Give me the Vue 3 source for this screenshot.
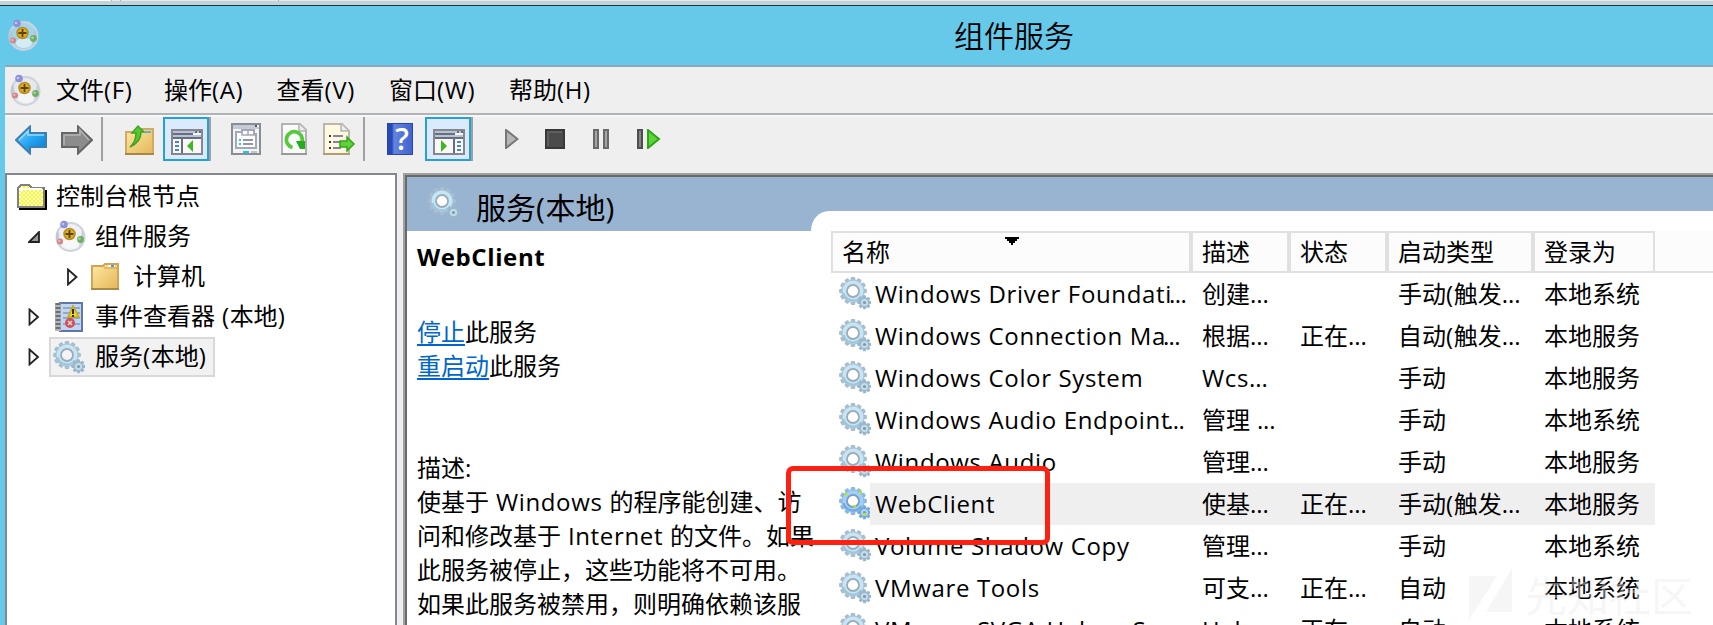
<script setup>
import { h } from 'vue'

// Splits mixed text so Latin runs and trailing dots carry their own tracking.
const Mix = (props) =>
  h('span', { class: 'mix' }, props.t.split(/(\.\.\.|[\x20-\x2d\x2f-\x7e]+)/).filter(Boolean).map((s) =>
    s === '...' ? h('span', { class: 'dots' }, s)
      : /^[\x20-\x7e]+$/.test(s) ? h('span', { class: 'latin' }, s) : s))
Mix.props = ['t']

const cog = (cx, cy, r1, r2, n) => {
  const pts = []
  for (let i = 0; i < n; i++) {
    const a = (i / n) * Math.PI * 2 - Math.PI / 2
    const s = Math.PI / n
    for (const [d, r] of [[-0.95, r1], [-0.5, r2], [0.5, r2], [0.95, r1]]) {
      pts.push((cx + Math.cos(a + d * s) * r).toFixed(2) + ' ' + (cy + Math.sin(a + d * s) * r).toFixed(2))
    }
  }
  return 'M' + pts.join('L') + 'Z'
}
const bigCog = cog(14, 14, 11, 14, 12)
const smallCog = cog(25.5, 25.5, 5, 7, 8)

const Gear = (props) =>
  h('svg', { class: 'gear', width: 32, height: 33, viewBox: '0 0 32 33' }, props.pale
    ? [
        h('path', { d: bigCog, fill: '#8fadcb' }),
        h('circle', { cx: 13, cy: 13, r: 9.5, fill: '#9fb4cc', stroke: '#cfeaf8', 'stroke-width': 3 }),
        h('circle', { cx: 13, cy: 13, r: 7, fill: '#99b4d1', stroke: '#8c9fb5', 'stroke-width': 1.500 }),
        h('path', { d: smallCog, fill: '#8aa9c4' }),
        h('circle', { cx: 25.5, cy: 25.5, r: 3.6, fill: '#b3cede' }),
        h('circle', { cx: 25.5, cy: 25.5, r: 1.4, fill: '#8fa9c2' }),
      ]
    : [
        h('path', { d: bigCog, fill: props.active ? '#8fb9de' : '#a9bfd0' }),
        h('circle', { cx: 14, cy: 14, r: 10.5, fill: props.active ? '#9fd0fa' : '#c5e6f4' }),
        h('path', { d: 'M4.5 16A9.700 9.700 0 0 0 22 19', fill: 'none', stroke: props.active ? '#6fa8e0' : '#9cc6de', 'stroke-width': 2 }),
        h('circle', { cx: 14, cy: 14, r: 6, fill: props.hole || '#fff', stroke: props.active ? '#7f9cc0' : '#9dabb9', 'stroke-width': 1.800 }),
        h('path', { d: smallCog, fill: props.active ? '#76a8dc' : '#9ab7cc' }),
        h('circle', { cx: 25.5, cy: 25.5, r: 3.6, fill: props.active ? '#a8d4fb' : '#c3ddea' }),
        h('circle', { cx: 25.5, cy: 25.5, r: 1.6, fill: '#8199ae' }),
        ...(props.active
          ? [[5, 6], [20, 4], [14, 18], [24, 26]].map(([x, y]) => h('rect', { x, y, width: 3, height: 2.500, fill: '#b5e61d' }))
          : []),
      ])
Gear.props = ['active', 'hole', 'pale']

const Globe = () =>
  h('svg', { class: 'globe', width: 32, height: 32, viewBox: '0 0 32 32' }, [
    h('circle', { cx: 16.500, cy: 17, r: 14, fill: '#dfe2ea', 'fill-opacity': 0.5, stroke: '#cdd3dc', 'stroke-width': 2 }),
    h('path', { d: 'M4 10A14 14 0 0 0 4 24Q7 17 4 10M28 10A14 14 0 0 1 25 27', fill: '#b4bac8', opacity: 0.6 }),
    h('ellipse', { cx: 17, cy: 24, rx: 8, ry: 5, fill: '#fff', opacity: 0.55 }),
    h('circle', { cx: 10, cy: 4.500, r: 3.800, fill: '#8d90d8' }),
    h('circle', { cx: 9, cy: 4, r: 1.300, fill: '#c1c5f4' }),
    h('circle', { cx: 15.500, cy: 14, r: 5.500, fill: '#e0ad1d', stroke: '#b58b28', 'stroke-width': 1.500 }),
    h('path', { d: 'M15.500 10V18M11.500 14H19.500', stroke: '#5b4508', 'stroke-width': 1.800 }),
    h('circle', { cx: 6, cy: 21.500, r: 3, fill: '#d08688' }),
    h('circle', { cx: 5.300, cy: 21, r: 1.200, fill: '#efb3b3' }),
    h('circle', { cx: 26.500, cy: 19.500, r: 3.400, fill: '#6cb065' }),
    h('circle', { cx: 25.500, cy: 18.700, r: 1.300, fill: '#a8d8a0' }),
  ])

const menus = ['文件(F)', '操作(A)', '查看(V)', '窗口(W)', '帮助(H)']
const columns = ['名称', '描述', '状态', '启动类型', '登录为']
const rows = [
  ['Windows Driver Foundati...', '创建...', '', '手动(触发...', '本地系统'],
  ['Windows Connection Ma...', '根据...', '正在...', '自动(触发...', '本地服务'],
  ['Windows Color System', 'Wcs...', '', '手动', '本地服务'],
  ['Windows Audio Endpoint...', '管理 ...', '', '手动', '本地系统'],
  ['Windows Audio', '管理...', '', '手动', '本地服务'],
  ['WebClient', '使基...', '正在...', '手动(触发...', '本地服务'],
  ['Volume Shadow Copy', '管理...', '', '手动', '本地系统'],
  ['VMware Tools', '可支...', '正在...', '自动', '本地系统'],
  ['VMware SVGA Helper S...', 'Help...', '正在...', '自动', '本地系统'],
]
const description = [
  '使基于 Windows 的程序能创建、访',
  '问和修改基于 Internet 的文件。如果',
  '此服务被停止，这些功能将不可用。',
  '如果此服务被禁用，则明确依赖该服',
]
</script>

<template>
  <div class="screen">
    <div class="tabstrip"><i class="tab-a"></i><i class="tab-b"></i><i class="tab-c"></i></div>
    <header class="titlebar"><Globe /><h1>组件服务</h1></header>
    <div class="window">
      <nav class="menubar">
        <Globe />
        <div class="menus"><span v-for="m in menus" :key="m"><Mix :t="m" /></span></div>
      </nav>
      <div class="toolbar">
        <svg class="back" width="32" height="30" viewBox="0 0 32 30">
          <defs><linearGradient id="blue" x1="0" y1="0" x2="1" y2="1"><stop offset="0" stop-color="#8ed6ff" /><stop offset=".5" stop-color="#25a5f3" /><stop offset="1" stop-color="#0876c8" /></linearGradient></defs>
          <path d="M1 15 15 1.500V8H31V22H15V28.500Z" fill="url(#blue)" stroke="#3c7fb5" stroke-width="2" />
          <path d="M4 15 13 6V10H29" fill="none" stroke="#8edcff" stroke-width="1.500" />
        </svg>
        <svg class="forward" width="32" height="30" viewBox="0 0 32 30">
          <path d="M31 15 17 1.500V8H1V22H17V28.500Z" fill="#8c8c8c" stroke="#666" stroke-width="2" />
          <path d="M3 20V10H19V5L28 15" fill="none" stroke="#b5b5b5" stroke-width="1.500" />
        </svg>
        <i class="sep s1"></i>
        <svg class="up" width="30" height="32" viewBox="0 0 30 32">
          <defs><linearGradient id="gold" x1="0" y1="0" x2="1" y2="1"><stop offset="0" stop-color="#fde9a4" /><stop offset="1" stop-color="#e6b658" /></linearGradient></defs>
          <path d="M1 9H14L17 6H28V31H1Z" fill="url(#gold)" stroke="#d0ac62" stroke-width="2" />
          <path d="M20 9H26" stroke="#5caee9" stroke-width="2" /><path d="M0 31H29" stroke="#a78646" stroke-width="2" />
          <path d="M5 24Q11 19 11 10H7L13 3 19 9H16Q16 19 5 24Z" fill="#56c72f" stroke="#43a02a" stroke-width="1.500" />
        </svg>
        <span class="pressed p1">
          <svg width="32" height="26" viewBox="0 0 32 26">
            <path d="M1 1H31V25H1Z" fill="#f8f8f8" stroke="#84878f" stroke-width="2" /><path d="M2 3H30M2 7H30" stroke="#b9c3d5" stroke-width="2" />
            <path d="M2 5H22M24 3H26M28 3H30M2 9H30M11 10V24" stroke="#666e80" stroke-width="2" />
            <path d="M4 13H8M4 17H8M4 21H8" stroke="#4a87c9" stroke-width="2" /><path d="M16 17 22 11V23Z" fill="#43b51f" />
          </svg>
        </span>
        <i class="sep"></i>
        <svg class="props" width="30" height="32" viewBox="0 0 30 32">
          <path d="M1 1H29V31H1Z" fill="#f3f4f6" stroke="#8a8d94" stroke-width="2" /><path d="M2 3H24M2 5H28" stroke="#c5cbd6" stroke-width="2" /><path d="M25 2V4" stroke="#50586a" stroke-width="2" />
          <path d="M5 25V9H11V7H23V11H25V25Z" fill="#fff" stroke="#a2a8b8" stroke-width="2" /><path d="M11 9V12H24M17 8V12" fill="none" stroke="#a2a8b8" stroke-width="1.500" />
          <path d="M12 17H22M12 21H22" stroke="#8f96a6" stroke-width="2" /><path d="M8 17H10M8 21H10M12 29H18" stroke="#18c6fb" stroke-width="2" /><path d="M20 29H26" stroke="#c1c1c1" stroke-width="2" />
        </svg>
        <svg class="refresh" width="26" height="32" viewBox="0 0 26 32">
          <path d="M1 1H19L25 7V31H1Z" fill="#fafafa" stroke="#b3b3b3" stroke-width="2" /><path d="M18 1V8H25" fill="#eee" stroke="#b3b3b3" stroke-width="1.500" /><path d="M0 31H26" stroke="#999" stroke-width="2" />
          <path d="M11.500 24.500A8 8 0 1 1 21 19" fill="none" stroke="#55c93b" stroke-width="3.800" /><path d="M15 18H24V26H19Z" fill="#24ab22" />
        </svg>
        <svg class="export" width="34" height="32" viewBox="0 0 34 32">
          <path d="M1 1H19L26 8V31H1Z" fill="#fff9e0" stroke="#b9b7ae" stroke-width="2" /><path d="M18 1V8H25" fill="#eee" stroke="#b3b3b3" stroke-width="1.500" /><path d="M0 31H27" stroke="#b39d70" stroke-width="2" />
          <path d="M6 13H8M6 19H8M6 25H8" stroke="#39344e" stroke-width="2" /><path d="M10 13H20M10 19H18M10 25H18" stroke="#8882a0" stroke-width="2" />
          <path d="M17 18H24V14L31 21 24 28V24H17Z" fill="#5ed13b" stroke="#37a51f" stroke-width="1.500" />
        </svg>
        <i class="sep s2"></i>
        <span class="help">?</span>
        <span class="pressed p2">
          <svg width="32" height="26" viewBox="0 0 32 26">
            <path d="M1 1H31V25H1Z" fill="#f8f8f8" stroke="#84878f" stroke-width="2" /><path d="M2 3H30M2 7H30" stroke="#b9c3d5" stroke-width="2" />
            <path d="M2 5H22M24 3H26M28 3H30M2 9H30M21 10V24" stroke="#666e80" stroke-width="2" />
            <path d="M24 13H28M24 17H28M24 21H28" stroke="#4a87c9" stroke-width="2" /><path d="M8 11 14 17 8 23Z" fill="#43b51f" />
          </svg>
        </span>
        <i class="sep"></i>
        <svg class="play" width="14" height="20" viewBox="0 0 14 20"><path d="M1 1 12.500 10 1 19Z" fill="#b6b6b6" stroke="#777" stroke-width="2" /></svg>
        <svg class="stop" width="20" height="20" viewBox="0 0 20 20"><path d="M1 1H19V19H1Z" fill="#4b4b4b" stroke="#383838" stroke-width="2" /><path d="M3 17V3H17" fill="none" stroke="#676767" stroke-width="1.500" /></svg>
        <svg class="pause" width="16" height="20" viewBox="0 0 16 20"><path d="M1 1H5V19H1ZM11 1H15V19H11Z" fill="#a4a4a4" stroke="#696969" stroke-width="2" /></svg>
        <svg class="restart" width="24" height="20" viewBox="0 0 24 20"><path d="M1 1H5V19H1Z" fill="#858585" stroke="#4e4e4e" stroke-width="2" /><path d="M11 1 22 10 11 19Z" fill="#5fd338" stroke="#2da514" stroke-width="2" /></svg>
      </div>

      <main class="panes">
        <aside class="tree">
          <div class="node">
            <svg class="rooticon" width="30" height="26" viewBox="0 0 30 26">
              <defs><pattern id="dither" width="4" height="4" patternUnits="userSpaceOnUse"><path fill="#fff" d="M0 0H4V4H0Z" /><path fill="#ff0" d="M0 0H2V2H0ZM2 2H4V4H2Z" /></pattern></defs>
              <path d="M2 25H29V6" fill="none" stroke="#000" stroke-width="2" /><path d="M1 23V4L4 1H12L15 4H27V23Z" fill="url(#dither)" stroke="#808080" stroke-width="2" shape-rendering="crispEdges" /><path d="M3 7V5H25" fill="none" stroke="#fff" stroke-width="2" />
            </svg>
            <Mix t="控制台根节点" />
          </div>
          <div class="node l1"><svg class="arrow" width="12" height="12" viewBox="0 0 12 12"><path d="M1 11H11V1Z" fill="#999" stroke="#222" stroke-width="1.800" /></svg><Globe /><Mix t="组件服务" /></div>
          <div class="node l2"><svg class="arrow" width="11" height="18" viewBox="0 0 11 18"><path d="M1 1.500 9.500 9 1 16.500Z" fill="#fff" stroke="#222" stroke-width="1.800" /></svg>
            <svg class="folder" width="28" height="27" viewBox="0 0 28 27"><path d="M1 3H12L14 1H27V26H1Z" fill="url(#gold)" stroke="#cda657" stroke-width="2" /><path d="M13 5H26" stroke="#c99d49" /><path d="M17 3H24" stroke="#fff" stroke-width="2" /><path d="M20 3H23" stroke="#429be0" stroke-width="2" /><path d="M0 26H28" stroke="#a98949" stroke-width="2" /></svg>
            <Mix t="计算机" /></div>
          <div class="node l1"><svg class="arrow" width="11" height="18" viewBox="0 0 11 18"><path d="M1 1.500 9.500 9 1 16.500Z" fill="#fff" stroke="#222" stroke-width="1.800" /></svg>
            <svg class="book" width="28" height="30" viewBox="0 0 28 30"><path d="M5 1H27V29H5Z" fill="#c3d6ef" stroke="#5f78a9" stroke-width="2" /><path d="M8 6H25M8 11H25M8 16H25M8 22H25" stroke="#7b9ccf" stroke-width="1.500" /><path d="M0 1H6V29H0Z" fill="#b5b5b8" /><path d="M3 1V29" stroke="#6b7079" stroke-width="5" stroke-dasharray="2 2" />
              <path d="M18 4 24 15H13Z" fill="#ead62b" stroke="#c9a80b" stroke-width="1.500" /><path d="M18 7V12M18 13V15" stroke="#332c00" stroke-width="2" /><circle cx="15" cy="21" r="5" fill="#cf5158" /><path d="M13 19 17 23M17 19 13 23" stroke="#f6d5d7" stroke-width="1.500" /></svg>
            <Mix t="事件查看器 (本地)" /></div>
          <div class="node l1 chosen"><svg class="arrow" width="11" height="18" viewBox="0 0 11 18"><path d="M1 1.500 9.500 9 1 16.500Z" fill="#fff" stroke="#222" stroke-width="1.800" /></svg>
            <span class="pick"><Gear hole="#f4f4f4" /><Mix t="服务(本地)" /></span></div>
        </aside>

        <section class="content">
          <div class="banner"><Gear pale /><Mix t="服务(本地)" /></div>
          <div class="body">
            <div class="detail">
              <h2>WebClient</h2>
              <p class="first"><a>停止</a>此服务</p>
              <p><a>重启动</a>此服务</p>
              <p class="label"><Mix t="描述:" /></p>
              <p v-for="d in description" :key="d"><Mix :t="d" /></p>
            </div>
            <div class="list">
              <div class="grid head">
                <div v-for="(c, i) in columns" :key="c" class="th">{{ c }}<svg v-if="i === 0" class="sort" width="14" height="8" viewBox="0 0 14 8"><path d="M0 0H14V2H12V4H10V6H8V8H6V6H4V4H2V2H0Z" /></svg></div>
                <div class="rest"></div>
              </div>
              <div v-for="r in rows" :key="r[0]" class="grid row" :class="{ sel: r[0] === 'WebClient' }">
                <div class="name"><Gear :active="r[0] === 'WebClient'" /><span class="cap"><Mix :t="r[0]" /></span></div>
                <div v-for="(c, i) in r.slice(1)" :key="i" class="td"><Mix :t="c" /></div>
              </div>
            </div>
          </div>
        </section>
      </main>
    </div>
    <div class="highlight"></div>
    <div class="watermark">
      <svg width="43" height="52" viewBox="0 0 43 52"><path d="M0 8H28L0 52ZM43 0V44H17Z" fill="currentColor" /></svg>
      <span>先知社区</span>
    </div>
  </div>
</template>

<style>
body { margin: 0; background: #66c9ea; overflow: hidden; }
.mix { white-space: pre; }
.latin { letter-spacing: 0.65px; }
.dots { letter-spacing: -0.1px; }
.name .dots { letter-spacing: -0.6px; margin-left: -3px; }
.gear, .globe { display: block; flex: none; }
</style>

<style scoped>
.screen { position: relative; width: 100vw; height: 100vh; overflow: hidden; display: flex; flex-direction: column; background: #66c9ea; color: #000; font: 24px/34px "Open Sans", "Noto Sans CJK SC", sans-serif; }
svg { display: block; flex: none; }
.tabstrip { height: 1px; flex: none; display: flex; background: #e8e8e8; border-bottom: 4px solid #c0d4da; }
.tab-a { width: 111px; background: #fff; border-right: 1px solid #aaa; }
.tab-b { width: 8px; border-right: 1px solid #aaa; }
.tab-c { width: 157px; border-right: 1px solid #aaa; }
.titlebar { height: 59px; flex: none; border-top: 1px solid #24333a; display: flex; align-items: center; padding-left: 7px; }
.titlebar .globe { margin: -2px 0 0 0; }
h1 { margin: -4px 0 0 915px; font-size: 30px; line-height: 40px; font-weight: 350; font-family: "Noto Sans CJK SC", sans-serif; }
.window { flex: 1; min-height: 0; margin-left: 5px; background: #efefef; border-top: 2px solid #8ba9bd; display: flex; flex-direction: column; }
.menubar { height: 46px; flex: none; border-bottom: 2px solid #b3b3b3; display: flex; align-items: center; padding-left: 4px; }
.menus { margin-left: 15px; display: grid; grid-template-columns: 108px 112.500px 112.500px 120px 120px; }
.toolbar { height: 58px; flex: none; box-sizing: border-box; border-top: 2px solid #f6f9fb; display: flex; align-items: flex-start; padding-left: 10px; }
.back, .forward { margin-top: 8px; }
.forward { margin-left: 14px; }
.sep { width: 2px; height: 44px; background: #a0a0a0; }
.s1 { margin-left: 8px; }
.up { margin: 6px 0 0 22px; }
.pressed { box-sizing: border-box; width: 46px; height: 44px; border: 2px solid #26a0da; background: #dbeafc; padding: 10px 0 0 6px; }
.p1 { margin-left: 8px; }
.props { margin: 6px 0 0 20px; }
.refresh { margin: 6px 0 0 20px; }
.export { margin: 6px 0 0 16px; }
.s2 { margin-left: 6px; }
.help { margin: 6px 12px 0 22px; width: 26px; height: 32px; background: linear-gradient(90deg, #2749b8 0 5px, #6584de 7px, #3c62cf); color: #fff; font-size: 30px; line-height: 32px; text-indent: 4px; text-align: center; font-weight: 600; box-shadow: inset 0 0 0 1px #2748a8; }
.play { margin: 12px 0 0 32px; }
.stop { margin: 12px 0 0 26px; }
.pause { margin: 12px 0 0 28px; }
.restart { margin: 12px 0 0 28px; }
.panes { flex: 1; min-height: 0; display: flex; }
.tree { box-sizing: border-box; width: 392px; flex: none; border: 2px solid #828790; border-bottom: 0; background: #fff; padding-top: 2px; margin-right: 6px; }
.node { height: 40px; display: flex; align-items: center; padding-left: 10px; line-height: 40px; }
.node .mix { margin-top: -2px; }
.rooticon { margin: -1px 9px 0 0; }
.l1 { padding-left: 21px; }
.l1 .arrow { width: 12px; }
.l1 .globe { margin: -3px 9px 0 14px; }
.l2 { padding-left: 60px; }
.l2 .folder { margin: -2px 14px 0 13px; }
.book { margin: 0 12px 0 15px; }
.pick { box-sizing: border-box; width: 166px; height: 40px; margin-left: 9px; border: 2px solid #d9d9d9; background: #f2f2f2; display: flex; align-items: center; line-height: 36px; gap: 10px; padding-left: 2px; }
.content { flex: 1; min-width: 0; display: flex; flex-direction: column; border-left: 2px solid #a0a0a0; border-top: 2px solid #a0a0a0; background: #fff; box-shadow: inset 2px 2px 0 #696969; padding: 2px 0 0 2px; }
.banner { height: 54px; flex: none; background: #99b4d1; display: flex; align-items: center; padding-left: 21px; font-size: 30px; }
.banner .gear { margin: -1px 16px 0 0; }
.banner .mix { margin-top: 7px; }
.body { flex: 1; min-height: 0; display: flex; }
.detail { width: 404px; flex: none; box-sizing: border-box; padding-left: 10px; position: relative; z-index: 1; white-space: nowrap; }
h2 { margin: 9px 0 41px; font-size: 24px; line-height: 34px; font-weight: 700; letter-spacing: .6px; }
p { margin: 0; }
a { color: #0066cc; text-decoration: underline; text-decoration-thickness: 2px; text-underline-offset: 3px; }
.label { margin-top: 68px; }
.list { flex: 1; min-width: 0; margin-top: -20px; background: #fff; border-top-left-radius: 18px 20px; padding: 20px 0 0 20px; }
.grid { display: grid; grid-template-columns: 360px 98px 98px 146px 122px 1fr; height: 42px; line-height: 42px; white-space: nowrap; }
.head { background: #fcfcfc; }
.th { box-sizing: border-box; border: 2px solid #e0e0e0; padding-left: 9px; line-height: 38px; position: relative; }
.rest { border-bottom: 2px solid #e0e0e0; }
.sort { position: absolute; left: 172px; top: 4px; }
.name { display: flex; align-items: center; padding-left: 8px; }
.name .gear { margin-top: -1px; }
.cap { flex: 1; padding-left: 5px; margin-left: -1px; }
.td { padding-left: 11px; }
.sel .td, .sel .cap { background: #efefef; }
.highlight { position: absolute; left: 786px; top: 466px; box-sizing: border-box; width: 264px; height: 79px; border: 5.500px solid #ff2012; border-radius: 7px; z-index: 2; }
.watermark { position: absolute; z-index: 3; left: 1469px; top: 568px; display: flex; gap: 13px; color: rgba(234, 234, 234, .42); font: 42px/52px "Noto Sans CJK SC", sans-serif; white-space: nowrap; }
</style>
